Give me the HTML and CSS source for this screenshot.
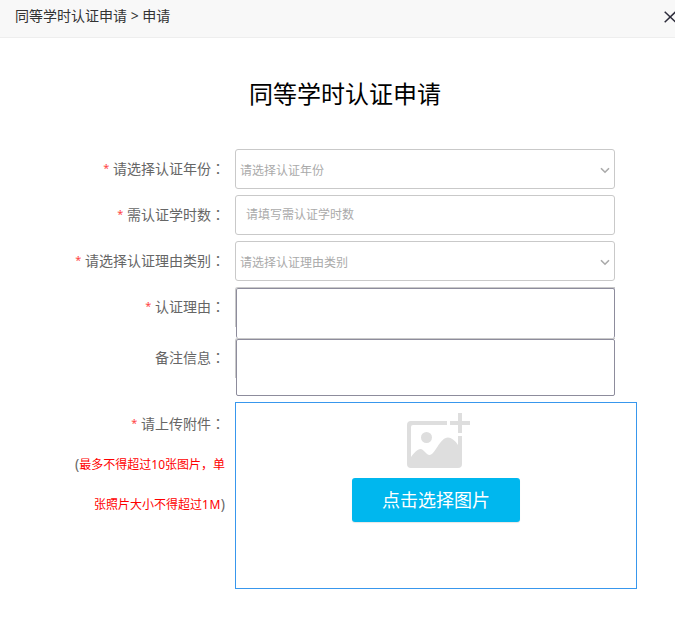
FILE: index.html
```html
<!DOCTYPE html>
<html lang="zh-CN">
<head>
<meta charset="utf-8">
<title>同等学时认证申请</title>
<link rel="stylesheet" href="styles.css">
</head>
<body>
<header class="bar">
  <span class="crumb">同等学时认证申请 &gt; 申请</span>
  <svg class="close" width="11" height="12" viewBox="0 0 11 12"><path d="M.7 .7 11.7 11.2M11.7 .7 .7 11.2"/></svg>
</header>
<main>
  <h1>同等学时认证申请</h1>
  <form class="form">
    <div class="row">
      <div class="label"><i>*</i> 请选择认证年份<b lang="zh-TW">：</b></div>
      <div class="field select"><span>请选择认证年份</span><svg width="10" height="7" viewBox="0 0 10 7"><path d="M1 1.2 5 5.2 9 1.2"/></svg></div>
    </div>
    <div class="row">
      <div class="label"><i>*</i> 需认证学时数<b lang="zh-TW">：</b></div>
      <div class="field input"><span>请填写需认证学时数</span></div>
    </div>
    <div class="row">
      <div class="label"><i>*</i> 请选择认证理由类别<b lang="zh-TW">：</b></div>
      <div class="field select"><span>请选择认证理由类别</span><svg width="10" height="7" viewBox="0 0 10 7"><path d="M1 1.2 5 5.2 9 1.2"/></svg></div>
    </div>
    <div class="row reason">
      <div class="label"><i>*</i> 认证理由<b lang="zh-TW">：</b></div>
      <div class="area"></div>
    </div>
    <div class="row remark">
      <div class="label">备注信息<b lang="zh-TW">：</b></div>
      <div class="area"></div>
    </div>
    <div class="row upload-row">
      <div class="label">
        <div class="line"><i>*</i> 请上传附件<b lang="zh-TW">：</b></div>
        <div class="line">(<em>最多不得超过10张图片，单</em></div>
        <div class="line"><em>张照片大小不得超过<span class="limit">1M</span></em>)</div>
      </div>
      <div class="upload">
        <svg class="picture" width="64" height="56" viewBox="0 0 64 56">
          <path d="M40 8H4Q0 8 0 12V51Q0 55 4 55H51Q55 55 55 51V23H51V32Q46 24.500 41 24.500C33 24.500 28 42 22.500 42C19 42 17 36 13.500 36C10.500 36 7 40 4 44V14Q4 12 6 12H40Z"/>
          <circle cx="19.500" cy="24.500" r="5.500"/>
          <path d="M51 0H55V8H63V12H55V20H51V12H43V8H51Z"/>
        </svg>
        <div class="pick">点击选择图片</div>
      </div>
    </div>
  </form>
</main>
</body>
</html>
```

FILE: styles.css
```css
* { box-sizing: border-box; }
body {
  margin: 0;
  width: 675px;
  height: 627px;
  overflow: hidden;
  background: #fff;
  color: #666;
  font: 14px "Noto Sans", "Noto Sans CJK SC", sans-serif;
}
.bar {
  display: flex;
  justify-content: space-between;
  height: 38px;
  padding-left: 15px;
  background: #f8f8f8;
  border-bottom: 1px solid #eee;
  color: #333;
  line-height: 32px;
}
.crumb { white-space: nowrap; }
.close { margin-top: 11px; fill: none; stroke: #2d2c3b; stroke-width: 1.5; }
h1 {
  margin: 38px 0 0;
  padding-left: 15px;
  height: 36px;
  line-height: 36px;
  text-align: center;
  font-size: 24px;
  font-weight: 400;
  color: #000;
}
.form { margin-top: 37px; }
.row { display: flex; gap: 10px; height: 40px; margin-bottom: 6px; }
.label {
  width: 225px;
  flex: none;
  text-align: right;
  line-height: 40px;
  white-space: nowrap;
}
.label i { font-style: normal; font-size: 11px; line-height: 1; vertical-align: 2px; color: #f44; }
.label b { font-family: "Noto Sans CJK TC", sans-serif; font-weight: 400; line-height: 1; }
.label em { font-style: normal; font-size: 12px; line-height: 1; color: #f00; }
.line { height: 40px; }
.limit { letter-spacing: .5px; }
.field {
  display: flex;
  align-items: center;
  justify-content: space-between;
  width: 380px;
  border: 1px solid #c9c9c9;
  border-radius: 3px;
  font-size: 12px;
  line-height: 18px;
  color: #aaa;
}
.select { padding: 3px 4px 0; }
.input { padding: 0 10px 1px; }
.field svg { fill: none; stroke: #aaa; stroke-width: 1.6; }
.area {
  position: relative;
  width: 379px;
  margin: 1px 0 0 1px;
  border: 1px solid #8d8c9c;
  border-radius: 2px;
  background: #fff;
}
.area::before {
  content: "";
  position: absolute;
  left: -2px;
  top: -2px;
  width: 379px;
  height: 39px;
  border: solid #c9c9c9;
  border-width: 1px 0 0 1px;
  border-radius: 3px 0 0 0;
}
.reason { height: 51px; margin: 0; }
.reason .area { border-bottom: 0; }
.remark { height: 58px; }
.upload {
  display: flex;
  flex-direction: column;
  align-items: center;
  width: 402px;
  height: 187px;
  padding-top: 10px;
  border: 1px solid #3897ed;
}
.upload-row { height: 187px; }
.upload-row .label { padding-top: 2px; }
.picture { fill: #dedede; margin-left: 6px; }
.pick {
  width: 168px;
  height: 44px;
  margin-top: 9px;
  border-radius: 3px;
  background: #00b7ee;
  box-shadow: 0 1px 1px rgba(0, 0, 0, .1);
  color: #fff;
  font-size: 18px;
  line-height: 44px;
  text-align: center;
}
```
